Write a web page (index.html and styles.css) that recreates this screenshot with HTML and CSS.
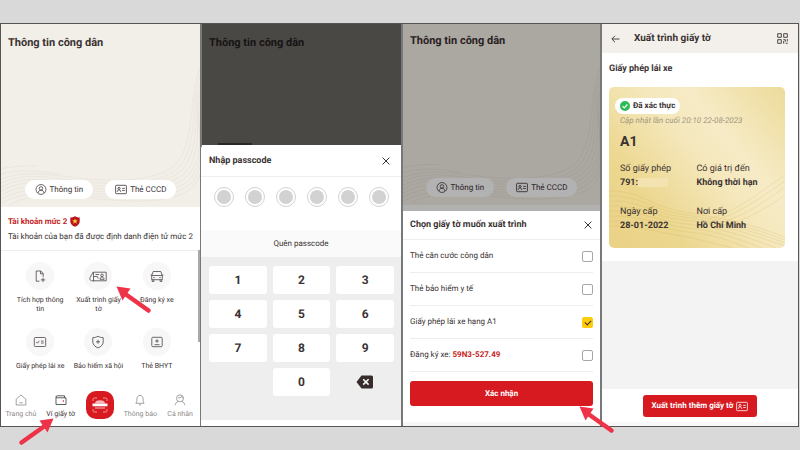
FILE: index.html
```html
<!DOCTYPE html>
<html lang="vi">
<head>
<meta charset="utf-8">
<meta name="viewport" content="width=device-width, initial-scale=1">
<title>Xuất trình giấy tờ</title>
<link rel="stylesheet" href="styles.css">
</head>
<body>
<svg class="defs" aria-hidden="true">
  <defs>
    <symbol id="waves" viewBox="0 0 199 184" preserveAspectRatio="none">
      <g fill="none" stroke="currentColor" stroke-width=".6">
        <path d="M0 160C22 150 42 153 70 157S165 166 181 140 190 80 199 52"/>
        <path d="M0 164C22 153 42 156 70 160S168 168 184 143 192 86 199 60"/>
        <path d="M0 168C22 156 44 159 72 163S171 171 187 146 193 94 199 69"/>
        <path d="M0 172C22 160 46 162 76 166S174 174 190 149 194 102 199 78"/>
        <path d="M0 176C22 164 48 165 80 169S177 177 192 152 195 110 199 88"/>
        <path d="M0 180C24 168 50 168 84 172S180 180 194 155 196 118 199 98"/>
        <path d="M8 182C28 171 54 171 90 175S183 183 196 158 197 128 199 110"/>
        <path d="M0 156C22 148 42 150 70 154S162 162 178 137 188 74 199 44"/>
        <path d="M0 151C16 146 36 147 60 151"/>
        <path d="M0 146C10 143 24 142 36 143"/>
      </g>
    </symbol>
    <symbol id="person" viewBox="0 0 12 12">
      <g fill="none" stroke="currentColor" stroke-width=".8"><circle cx="6" cy="6" r="5.4"/><circle cx="6" cy="4.8" r="1.9"/><path d="M2.7 9.8C3 7.9 4.300 6.800 6 6.800s3 1.100 3.300 3"/></g>
    </symbol>
    <symbol id="idcard" viewBox="0 0 12 10">
      <g fill="none" stroke="currentColor" stroke-width=".8"><rect x=".6" y=".8" width="10.800" height="8.400" rx=".8"/><circle cx="4" cy="3.900" r="1.100"/><path d="M2.200 7.400C2.400 6 3 5.400 4 5.400s1.600.6 1.800 2M7.200 3.900h2.600M7.200 6h2.600"/></g>
    </symbol>
    <symbol id="close" viewBox="0 0 8 8"><path d="M.6.6l6.800 6.800M7.400.6L.6 7.400" fill="none" stroke="currentColor" stroke-width="1"/></symbol>
    <symbol id="arrow" viewBox="0 0 36 28">
      <path d="M32.500 24.500L10 8.500" stroke="#ee3349" stroke-width="4.600" stroke-linecap="round"/>
      <path d="M.5.5l14 2L6.500 14.500z" fill="#ee3349"/>
    </symbol>
  </defs>
</svg>

<main class="board">

  <section class="phone">
    <header class="hero">
      <svg class="waves" aria-hidden="true"><use href="#waves"/></svg>
      <h2 class="hero-title">Thông tin công dân</h2>
      <div class="pills">
        <button class="pill"><svg class="i12" aria-hidden="true"><use href="#person"/></svg>Thông tin</button>
        <button class="pill"><svg class="i12" aria-hidden="true"><use href="#idcard"/></svg>Thẻ CCCD</button>
      </div>
    </header>
    <div class="account">
      <p class="level">Tài khoản mức 2
        <svg class="shield" viewBox="0 0 10 11" aria-hidden="true"><path d="M5 .3C6.500 1.200 8 1.500 9.700 1.500V5.500C9.700 8 7.500 9.900 5 10.800 2.500 9.900.3 8 .3 5.500V1.500C2 1.500 3.500 1.200 5 .3z" fill="#b9151c"/><path d="M5 2.400l.8 1.900 2 .1-1.600 1.300.6 2L5 6.600 3.200 7.700l.6-2L2.200 4.400l2-.1z" fill="#ffc52e"/></svg>
      </p>
      <p class="note">Tài khoản của bạn đã được định danh điện tử mức 2</p>
    </div>
    <div class="services">
      <div class="service-grid">
        <a class="service" href="#"><span class="disc"><svg viewBox="0 0 18 14"><path d="M8.500 12.200H5.200V2h4.600l2.400 2.500v3.200M9.500 2.200v2.600h2.500M12 8.700v4.400M9.800 10.900h4.400"/></svg></span>Tích hợp thông tin</a>
        <a class="service" href="#"><span class="disc"><svg viewBox="0 0 18 14"><path d="M4.500 3.200h12.700v8.600H4.500zM4.200 3L1 8.700c-.5 1.300 0 2.500 1.300 3.100h3M6.500 5.500h3.600M4.800 7.500h3.500l1 2.200M11 10.300c.2-1.700 1-2.200 2-2.200s1.900.5 2.100 2.200z"/><circle cx="13" cy="6.300" r="1.300"/></svg></span>Xuất trình giấy tờ</a>
        <a class="service" href="#"><span class="disc"><svg viewBox="0 0 18 14"><path d="M3.700 6.500l1.500-4h7.600l1.500 4M3.700 6.500h10.600v4.200H3.700zM4.200 10.700v1.800h1.700v-1.800M12.100 10.700v1.800h1.700v-1.800M2.700 6h1.200M14.100 6h1.200M5.300 8.600h1.400M11.300 8.600h1.400"/></svg></span>Đăng ký xe</a>
        <a class="service" href="#"><span class="disc"><svg viewBox="0 0 18 14"><rect x="3.300" y="2.500" width="11.400" height="9" rx="1"/><path d="M5.300 7l1.100 1.200 1.900-2.300M10 6.100h2.700M10 8h2.700"/></svg></span>Giấy phép lái xe</a>
        <a class="service" href="#"><span class="disc"><svg viewBox="0 0 18 14"><path d="M9 1.300C10.800 2.300 12.500 2.600 14.200 2.600V7c0 2.800-2.400 4.800-5.200 5.900C6.200 11.800 3.800 9.800 3.800 7V2.600C5.500 2.600 7.200 2.300 9 1.300zM9 4.800v4M7 6.800h4"/></svg></span>Bảo hiểm xã hội</a>
        <a class="service" href="#"><span class="disc"><svg viewBox="0 0 18 14"><rect x="3.800" y="2.300" width="10.400" height="9.400" rx="1"/><path d="M9 4.200v3.600M7.200 6h3.600M6.500 9.700h5"/></svg></span>Thẻ BHYT</a>
        <span class="service"><span class="disc"></span></span>
        <span class="service"><span class="disc"></span></span>
      </div>
    </div>
    <nav class="tabs">
      <a href="#"><svg viewBox="0 0 12 12"><path d="M1.200 5.200L6 1l4.800 4.200V11H1.200zM4.300 8.800h3.400"/></svg>Trang chủ</a>
      <a class="active" href="#"><svg viewBox="0 0 12 12"><path d="M1 2.700V10.500h10V3.800H2.200C1 3.800.8 2 2 1.800h7.500v2"/><path d="M8.300 6v2" stroke="#d71920"/></svg>Ví giấy tờ</a>
      <button class="scan" aria-label="Quét mã"><svg viewBox="0 0 28 28"><path d="M7 10V8.500Q7 7 8.500 7H11M17 7h2.500Q21 7 21 8.500V10M7 18v1.500Q7 21 8.500 21H11M17 21h2.500q1.500 0 1.500-1.500V18" fill="none" stroke="#f6b6b8" stroke-width=".8"/><path d="M9 12.500Q9 9.300 14 9.300t5 3.200z" fill="#f7b8ba"/><path d="M6.500 12.500h15v2.800h-15z" fill="#fff"/><path d="M9 16h10v2H9z" fill="#e56b70"/></svg></button>
      <a href="#"><svg viewBox="0 0 12 12"><path d="M1.800 9.300C3 8.300 2.900 6.500 2.900 5 2.900 3 4.200 1.300 6 1.300S9.100 3 9.100 5c0 1.500-.1 3.300 1.100 4.300zM5 10.800h2"/></svg>Thông báo</a>
      <a href="#"><svg viewBox="0 0 12 12"><circle cx="6" cy="4.300" r="3.500"/><path d="M4 3.800C5.500 4 7 3.500 7.500 2.500 8 3.500 8.500 4 9.300 4.200M4.300 7.400C2.500 8 1.500 9.200 1.100 11.200M7.700 7.400c1.800.6 2.800 1.800 3.200 3.800"/></svg>Cá nhân</a>
    </nav>
    <svg class="arrow arrow-service" aria-hidden="true"><use href="#arrow"/></svg>
    <svg class="arrow arrow-wallet" aria-hidden="true"><use href="#arrow"/></svg>
    <span class="scrollbar"></span>
  </section>

  <section class="phone">
    <header class="hero hero-dark">
      <h2 class="hero-title">Thông tin công dân</h2>
      <span class="peek"></span>
    </header>
    <div class="sheet passcode">
      <div class="sheet-head"><h3>Nhập passcode</h3><button class="close" aria-label="Đóng"><svg><use href="#close"/></svg></button></div>
      <div class="dots"><span></span><span></span><span></span><span></span><span></span><span></span></div>
      <a class="forgot" href="#">Quên passcode</a>
      <div class="keypad">
        <button>1</button><button>2</button><button>3</button>
        <button>4</button><button>5</button><button>6</button>
        <button>7</button><button>8</button><button>9</button>
        <button class="zero">0</button>
        <button class="erase" aria-label="Xóa"><svg viewBox="0 0 18 14"><path d="M5.500.5h10Q17 .5 17 2v10q0 1.500-1.500 1.500h-10L.5 7z" fill="#352c2b"/><path d="M7.200 4.200l5.400 5.400M12.600 4.200L7.200 9.600" stroke="#fff" stroke-width="1.500"/></svg></button>
      </div>
    </div>
  </section>

  <section class="phone phone-choose">
    <header class="hero hero-dim">
      <svg class="waves" aria-hidden="true"><use href="#waves"/></svg>
      <h2 class="hero-title">Thông tin công dân</h2>
      <div class="pills">
        <button class="pill"><svg class="i12" aria-hidden="true"><use href="#person"/></svg>Thông tin</button>
        <button class="pill"><svg class="i12" aria-hidden="true"><use href="#idcard"/></svg>Thẻ CCCD</button>
      </div>
    </header>
    <form class="sheet choose">
      <div class="sheet-head"><h3>Chọn giấy tờ muốn xuất trình</h3><button type="button" class="close" aria-label="Đóng"><svg><use href="#close"/></svg></button></div>
      <label class="option"><span>Thẻ căn cước công dân</span><input type="checkbox"></label>
      <label class="option"><span>Thẻ bảo hiểm y tế</span><input type="checkbox"></label>
      <label class="option"><span>Giấy phép lái xe hạng A1</span><input type="checkbox" checked></label>
      <label class="option"><span>Đăng ký xe: <b>59N3-527.49</b></span><input type="checkbox"></label>
      <button type="button" class="primary confirm">Xác nhận</button>
    </form>
    <svg class="arrow arrow-confirm" aria-hidden="true"><use href="#arrow"/></svg>
  </section>

  <section class="phone phone-license">
    <header class="bar">
      <button class="back" aria-label="Quay lại"><svg viewBox="0 0 9 8"><path d="M8.500 4H1M4 .8L.8 4 4 7.200" fill="none" stroke="currentColor" stroke-width=".9"/></svg></button>
      <h2>Xuất trình giấy tờ</h2>
      <button class="qr" aria-label="Mã QR"><svg viewBox="0 0 11 11"><path d="M.7.7h3.600v3.600H.7zM6.700.7h3.600v3.600H6.700zM.7 6.700h3.600v3.600H.7zM6.300 6.700h2v2M10.300 6v2.500M6.700 8v2.700M8.700 10.300h2" fill="none" stroke="currentColor" stroke-width=".9"/></svg></button>
    </header>
    <div class="license">
      <h3>Giấy phép lái xe</h3>
      <article class="card">
        <svg class="card-waves" viewBox="0 0 177 161" preserveAspectRatio="none" aria-hidden="true"><g fill="none" stroke="#caa548" stroke-opacity=".3" stroke-width=".6">
          <path d="M0 104C30 103 40 118 70 124S130 132 177 150"/><path d="M0 109C30 108 42 122 72 127S132 136 177 153"/><path d="M0 114C30 113 44 126 74 130S134 140 177 156"/><path d="M0 119C30 118 46 130 76 133S134 144 177 159"/><path d="M0 124C30 123 48 134 78 137S134 148 168 161"/><path d="M0 129C30 128 50 138 80 141S130 152 154 161"/><path d="M0 134C30 133 50 142 80 145S126 156 140 161"/><path d="M0 139C30 138 50 146 80 150L124 161"/><path d="M100 132C130 124 150 106 177 88M100 135C130 128 150 112 177 94M102 138C132 132 152 118 177 100M104 141C134 136 154 124 177 108"/>
        </g></svg>
        <p class="verified"><svg viewBox="0 0 10 10" aria-hidden="true"><circle cx="5" cy="5" r="5" fill="#2dbb55"/><path d="M2.600 5.100l1.700 1.700 3.100-3.300" fill="none" stroke="#fff" stroke-width="1.200"/></svg>Đã xác thực</p>
        <p class="updated">Cập nhật lần cuối 20:10 22-08-2023</p>
        <p class="grade">A1</p>
        <dl class="facts">
          <div><dt>Số giấy phép</dt><dd class="masked">791:</dd></div>
          <div><dt>Có giá trị đến</dt><dd>Không thời hạn</dd></div>
          <div><dt>Ngày cấp</dt><dd>28-01-2022</dd></div>
          <div><dt>Nơi cấp</dt><dd>Hồ Chí Minh</dd></div>
        </dl>
      </article>
    </div>
    <footer class="foot"><button class="primary more">Xuất trình thêm giấy tờ<svg class="i12" aria-hidden="true"><use href="#idcard"/></svg></button></footer>
  </section>

</main>
</body>
</html>
```
FILE: styles.css
```css
* { box-sizing: border-box; margin: 0; padding: 0; }

body {
  min-height: 100vh;
  display: flex;
  flex-direction: column;
  padding: 23px 1px 23px 0;
  background: #d9d9d9;
  color: #3a3232;
  font: 8px/10px Roboto, "Noto Sans", sans-serif;
  text-rendering: geometricPrecision;
}

button, input { font: inherit; color: inherit; border: 0; background: none; text-rendering: inherit; }
a { color: inherit; text-decoration: none; }
svg { display: block; flex: none; }
.defs { position: absolute; width: 0; height: 0; }
.i12 { width: 12px; height: 11px; }

.board {
  flex: 1;
  display: grid;
  grid-template-columns: 199fr 199fr 197fr 196fr;
  gap: 2px;
  border: 1px solid #555;
  background: #77787a;
}
.phone {
  position: relative;
  min-width: 0;
  display: flex;
  flex-direction: column;
  background: #fff;
}

/* Citizen header */
.hero {
  position: relative;
  display: flex;
  flex-direction: column;
  justify-content: space-between;
  height: 183px;
  padding: 12px 7px 8px;
  background: #f2eee8;
}
.hero-title { position: relative; font-size: 11px; line-height: 14px; font-weight: 700; }
.waves { position: absolute; inset: 0; width: 100%; height: 100%; color: #e6e0d6; }
.pills { position: relative; display: flex; justify-content: center; gap: 12px; }
.pill {
  display: flex;
  align-items: center;
  gap: 3px;
  height: 19px;
  padding: 0 10px;
  border-radius: 10px;
  background: #fff;
}
.hero-dark { height: 121px; background: #4a4845; color: #161313; }
.peek { position: absolute; left: 16px; bottom: 0; width: 34px; height: 2px; background: #2b2726; }
.hero-dim { height: 187px; padding: 10px 7px 8px; border-bottom: 6px solid #b1b1b0; background: #aba7a1; color: #28201f; }
.hero-dim .waves { color: #a19d96; }
.hero-dim .pill { background: #b2b2b2; }

/* Account level */
.account { padding: 9px 7px 8px; border-bottom: 1px solid #eee; }
.level { display: flex; align-items: center; gap: 3px; color: #c61f25; font-weight: 700; }
.shield { width: 10px; height: 11px; }
.note { margin-top: 5px; white-space: nowrap; }

/* Services */
.services { flex: 1 1 0; min-height: 0; overflow: hidden; padding: 11px 14px 0 10px; }
.service-grid { display: grid; grid-template-columns: repeat(3, 1fr); row-gap: 14px; }
.service { padding: 0 4px; text-align: center; font-size: 7px; line-height: 9px; min-height: 52px; }
.disc {
  display: grid;
  place-items: center;
  width: 28px;
  height: 28px;
  margin: 0 auto 6px;
  border-radius: 50%;
  background: #f7f7f7;
}
.disc svg { width: 18px; height: 14px; fill: none; stroke: #4b4444; stroke-width: .8; }
.scrollbar { position: absolute; right: 0; top: 226px; width: 2px; height: 92px; background: #aaa; }

.tabs { display: grid; grid-template-columns: repeat(5, 1fr); height: 39px; padding-top: 7px; color: #8d8989; font-size: 7px; }
.tabs a { display: flex; flex-direction: column; align-items: center; gap: 3px; white-space: nowrap; }
.tabs svg { width: 12px; height: 12px; fill: none; stroke: currentColor; stroke-width: .8; }
.tabs .active { color: #3a3232; }
.tabs .scan { width: 28px; height: 28px; margin-top: -3px; justify-self: center; border-radius: 10px; background: #d71920; }
.tabs .scan svg { width: 28px; height: 28px; stroke: none; }

/* Pointing arrows */
.arrow { position: absolute; z-index: 2; width: 36px; height: 28px; }
.arrow-service { left: 115px; top: 262px; }
.arrow-wallet { left: 17px; bottom: -20px; transform: scaleX(-1); }
.arrow-confirm { right: -15px; bottom: -12px; }

/* Bottom sheets */
.sheet { background: #fff; }
.sheet-head {
  display: flex;
  align-items: center;
  justify-content: space-between;
  padding: 0 11px 0 7px;
  border-bottom: 1px solid #eee;
}
.sheet-head h3 { font-size: 9px; font-weight: 700; }
.close svg { width: 8px; height: 8px; }

.passcode { margin: 0 0 0 -1px; border-radius: 4px 4px 0 0; }
.passcode .sheet-head { height: 32px; padding-left: 8px; }
.hero-dark + .sheet { flex: 1; display: flex; flex-direction: column; }
.dots { display: flex; justify-content: space-between; padding: 10px 12px 23px 13px; }
.dots span { width: 20px; height: 20px; border: 1px solid #d2d2d2; border-radius: 50%; padding: 2px; background: #d2d2d2 content-box; }
.forgot { padding: 9px 0 8px; background: #fafafa; text-align: center; }
.keypad {
  flex: 1;
  display: grid;
  grid-template-columns: repeat(3, 1fr);
  grid-auto-rows: 28px;
  align-content: start;
  gap: 6px;
  margin-bottom: 6px;
  padding: 9px 7px 9px 8px;
  background: #eee;
}
.keypad button { border-radius: 3px; background: #fff; font-size: 12px; font-weight: 700; }
.keypad .zero { grid-column: 2; }
.keypad .erase { display: grid; place-items: center; background: none; }
.erase svg { width: 18px; height: 14px; }

.choose .sheet-head { height: 29px; padding-right: 8px; }
.option {
  display: flex;
  align-items: center;
  justify-content: space-between;
  height: 33px;
  margin: 0 7px;
  border-bottom: 1px solid #eee;
}
.option b { color: #c61f25; }
.option input { appearance: none; width: 11px; height: 11px; border: 1px solid #a9a6a6; border-radius: 2px; }
.option input:checked {
  border-color: #ffcc0a;
  background: #ffcc0a;
  display: grid;
  place-items: center;
}
.option input:checked::after {
  content: "";
  width: 5px;
  height: 3px;
  border: solid #3a3232;
  border-width: 0 0 1px 1px;
  transform: rotate(-45deg);
}
.primary { border-radius: 3px; background: #d71920; color: #fff; font-weight: 700; }
.confirm { display: block; width: calc(100% - 14px); height: 25px; margin: 9px 7px 0; }
.phone-choose { border-bottom: 4px solid #f6f6f6; }

/* License screen */
.phone-license { background: #f3f3f3; }
.bar { display: flex; align-items: center; height: 29px; padding: 0 10px 0 9px; background: #f3efeb; }
.bar h2 { flex: 1; margin-left: 14px; font-size: 10px; font-weight: 700; }
.back svg { width: 9px; height: 8px; }
.qr svg { width: 11px; height: 11px; }
.license { padding: 11px 13px 13px 7px; background: #fff; }
.license h3 { font-size: 9px; font-weight: 700; }
.card {
  position: relative;
  height: 161px;
  margin-top: 13px;
  padding: 11px 11px 0 6px;
  border-radius: 5px;
  overflow: hidden;
  background: linear-gradient(50deg, #ead287 0%, #ecd78f 25%, #f5e8bd 55%, #f6ebc6 68%, #eddb9a 100%);
}
.card > p, .facts { position: relative; }
.card-waves { position: absolute; inset: 0; width: 100%; height: 100%; }
.verified {
  display: flex;
  align-items: center;
  gap: 3px;
  width: max-content;
  height: 16px;
  padding: 0 5px;
  border-radius: 8px;
  background: #fff;
  font-weight: 700;
}
.verified svg { width: 10px; height: 10px; }
.updated { margin: 2px 0 0 5px; color: #a0967c; font-style: italic; white-space: nowrap; }
.grade { margin: 8px 0 0 5px; font-size: 14px; line-height: 16px; font-weight: 700; }
.facts { display: grid; grid-template-columns: 77fr 78fr; row-gap: 14px; margin: 12px 0 0 5px; white-space: nowrap; }
.facts dt { line-height: 14px; font-size: 9px; }
.facts dd { line-height: 15px; font-weight: 700; font-size: 9px; }
.masked::after { content: ""; display: inline-block; width: 30px; height: 9px; background: #f3e3b0; vertical-align: middle; }
.foot { margin-top: auto; display: flex; justify-content: center; padding: 6px 0 5px; background: #fff; border-bottom: 4px solid #f8f8f8; }
.more { display: flex; align-items: center; justify-content: center; gap: 3px; height: 22px; padding: 0 9px; }
```
